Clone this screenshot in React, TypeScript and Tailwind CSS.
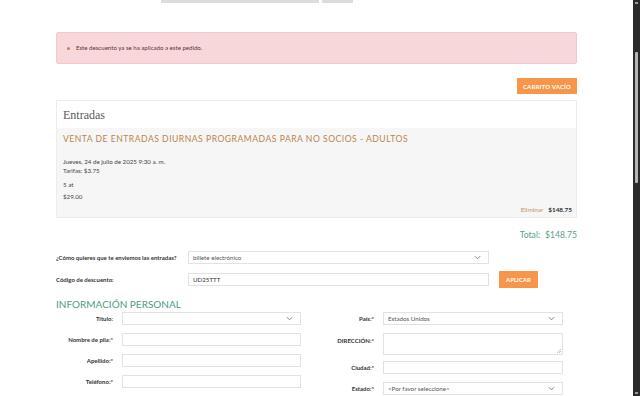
import React from 'react';

const Chevron = () => (
  <svg width="7" height="5" viewBox="0 0 8 5" className="text-gray-500">
    <path d="M1 1l3 3 3-3" fill="none" stroke="currentColor" strokeWidth="1" />
  </svg>
);

const Select: React.FC<{ value?: string; className?: string }> = ({ value, className }) => (
  <div className={`flex items-center justify-between h-[13px] border border-[#e2e2e2] bg-white pl-[4px] pr-[7px] text-[6.2px] text-[#555] ${className ?? ''}`}>
    <span>{value}</span>
    <Chevron />
  </div>
);

const Input: React.FC<{ value?: string; className?: string }> = ({ value, className }) => (
  <div className={`flex items-center h-[13px] border border-[#e2e2e2] bg-white pl-[4px] text-[6.2px] text-[#333] ${className ?? ''}`}>
    {value}
  </div>
);

const Label: React.FC<{ children: React.ReactNode; className?: string }> = ({ children, className }) => (
  <span className={`w-[57px] shrink-0 text-right text-[6px] font-bold text-[#333] ${className ?? ''}`}>{children}</span>
);

const App: React.FC = () => {
  return (
    <div className="flex h-[396px] w-[640px] overflow-hidden bg-white" style={{ fontFamily: 'Lato, "Open Sans", sans-serif' }}>
      {/* page */}
      <div className="relative w-[633px] px-[56px]">
        {/* cut off top controls */}
        <div className="absolute left-[161px] top-0 h-[3px] w-[158px] bg-[#dcdcdc]" />
        <div className="absolute left-[322px] top-0 h-[3px] w-[31px] bg-[#dcdcdc]" />

        {/* alert */}
        <div className="mt-[32px] flex h-[32px] items-center rounded-[2px] border border-[#f1c8cc] bg-[#f8d7da] pl-[10px] text-[6.1px] text-[#5e3236]">
          <span className="mr-[6px] inline-block h-[3px] w-[3px] rounded-full bg-[#b68a4a]" />
          Este descuento ya se ha aplicado a este pedido.
        </div>

        <div className="mt-[14px] flex justify-end">
          <button className="h-[16px] w-[60px] bg-[#f7964a] text-[6px] font-bold tracking-[0.2px] text-white">CARRITO VACÍO</button>
        </div>

        {/* tickets card */}
        <div className="mt-[6px] border border-[#ececec]">
          <div className="flex h-[27px] items-center bg-white pl-[6px] text-[12px] text-[#5a5a5a]" style={{ fontFamily: '"Liberation Serif", serif' }}>
            Entradas
          </div>
          <div className="bg-[#f6f6f6] pl-[6px] pr-[4px] pb-[3px] pt-[5px]">
            <div className="text-[8.6px] leading-[13px] tracking-[0.5px] text-[#b8864f]">VENTA DE ENTRADAS DIURNAS PROGRAMADAS PARA NO SOCIOS - ADULTOS</div>
            <div className="mt-[11px] text-[6.2px] leading-[9px] text-[#444]">
              <div>Jueves, 24 de julio de 2025 9:30 a. m.</div>
              <div>Tarifas: $3.75</div>
              <div className="mt-[5px]">5 at</div>
              <div className="mt-[3px]">$29.00</div>
            </div>
            <div className="mt-[4px] flex justify-end gap-[5px] text-[6.4px] leading-[9px]">
              <span className="text-[#c0935f]">Eliminar</span>
              <span className="font-bold text-[#333]">$148.75</span>
            </div>
          </div>
        </div>

        <div className="mt-[11px] flex justify-end gap-[5px] text-[8.6px] leading-[13px] text-[#5c9d8a]">
          <span>Total:</span>
          <span>$148.75</span>
        </div>

        {/* delivery + coupon */}
        <div className="mt-[9px] flex items-center">
          <span className="w-[132px] text-[6px] font-bold text-[#333]">¿Cómo quieres que te enviemos las entradas?</span>
          <Select value="billete electrónico" className="w-[301px]" />
        </div>
        <div className="mt-[7px] flex items-center">
          <span className="w-[132px] text-[6px] font-bold text-[#333]">Código de descuento:</span>
          <Input value="UD25TTT" className="w-[301px]" />
          <button className="ml-[10px] h-[17px] w-[39px] bg-[#f7964a] text-[6px] font-bold text-white">APLICAR</button>
        </div>

        <div className="mt-[10px] text-[10px] leading-[12px] text-[#4f9a84]">INFORMACIÓN PERSONAL</div>

        {/* personal info */}
        <div className="mt-[2px] flex gap-[16px]">
          <div className="flex flex-col gap-[8px]">
            <div className="flex items-center gap-[9px]">
              <Label>Título:</Label>
              <Select className="w-[179px]" />
            </div>
            <div className="flex items-center gap-[9px]">
              <Label>Nombre de pila:*</Label>
              <Input className="w-[179px]" />
            </div>
            <div className="flex items-center gap-[9px]">
              <Label>Apellido:*</Label>
              <Input className="w-[179px]" />
            </div>
            <div className="flex items-center gap-[9px]">
              <Label>Teléfono:*</Label>
              <Input className="w-[179px]" />
            </div>
          </div>
          <div className="flex flex-col">
            <div className="flex items-center gap-[9px]">
              <Label>País:*</Label>
              <Select value="Estados Unidos" className="w-[180px]" />
            </div>
            <div className="mt-[8px] flex items-start gap-[9px]">
              <Label className="pt-[3px]">DIRECCIÓN:*</Label>
              <div className="relative h-[22px] w-[180px] border border-[#e2e2e2] bg-white">
                <svg width="4" height="4" viewBox="0 0 4 4" className="absolute bottom-[1px] right-[1px] text-gray-400">
                  <path d="M4 0L0 4M4 2L2 4" stroke="currentColor" strokeWidth="0.6" />
                </svg>
              </div>
            </div>
            <div className="mt-[6px] flex items-center gap-[9px]">
              <Label>Ciudad:*</Label>
              <Input className="w-[180px]" />
            </div>
            <div className="mt-[8px] flex items-center gap-[9px]">
              <Label>Estado:*</Label>
              <Select value="<Por favor seleccione>" className="w-[180px]" />
            </div>
          </div>
        </div>
      </div>

      {/* scrollbar */}
      <div className="relative h-full w-[7px] bg-[#2b2b2b]">
        <div className="absolute left-[2px] top-[2px] h-[2px] w-[3px] bg-[#999]" />
        <div className="absolute left-[2px] top-[52px] h-[131px] w-[3px] rounded-[1px] bg-[#b5b5b5]" />
        <div className="absolute bottom-[2px] left-[2px] h-[2px] w-[3px] bg-[#999]" />
      </div>
    </div>
  );
};

export default App;
